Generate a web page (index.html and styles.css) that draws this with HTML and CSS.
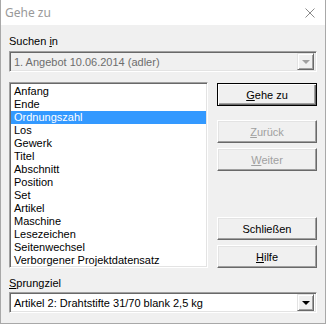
FILE: index.html
```html
<!DOCTYPE html>
<html lang="de">
<head>
    <meta charset="UTF-8">
    <title>Gehe zu</title>
    <link rel="stylesheet" href="styles.css">
</head>
<body>
    <div class="window">
        <div class="titlebar">
            <span class="title">Gehe zu</span>
            <svg class="close" width="10" height="10" viewBox="0 0 10 10">
                <path d="M0.5 0.5 L9.5 9.5 M9.5 0.5 L0.5 9.5" stroke="#8a8a8a" stroke-width="1" fill="none"/>
            </svg>
        </div>

        <div class="content">
            <div class="label label-top">Suchen <u>i</u>n</div>
            <div class="combo disabled">
                <span class="combo-text">1. Angebot 10.06.2014 (adler)</span>
                <span class="combo-btn"><span class="arrow"></span></span>
            </div>

            <div class="main">
                <ul class="listbox">
                    <li>Anfang</li>
                    <li>Ende</li>
                    <li class="selected">Ordnungszahl</li>
                    <li>Los</li>
                    <li>Gewerk</li>
                    <li>Titel</li>
                    <li>Abschnitt</li>
                    <li>Position</li>
                    <li>Set</li>
                    <li>Artikel</li>
                    <li>Maschine</li>
                    <li>Lesezeichen</li>
                    <li>Seitenwechsel</li>
                    <li>Verborgener Projektdatensatz</li>
                </ul>

                <div class="buttons">
                    <button class="btn default"><u>G</u>ehe zu</button>
                    <button class="btn off gap-big"><u>Z</u>urück</button>
                    <button class="btn off"><u>W</u>eiter</button>
                    <button class="btn push-down">Schließen</button>
                    <button class="btn"><u>H</u>ilfe</button>
                </div>
            </div>

            <div class="label label-bottom"><u>S</u>prungziel</div>
            <div class="combo">
                <span class="combo-text">Artikel 2: Drahtstifte 31/70 blank 2,5 kg</span>
                <span class="combo-btn"><span class="arrow"></span></span>
            </div>
        </div>
    </div>
</body>
</html>
```

FILE: styles.css
```css
body {
    margin: 0;
    font-family: "Liberation Sans", Arial, sans-serif;
    font-size: 11px;
    color: #000;
}
.window {
    width: 326px;
    height: 324px;
    box-sizing: border-box;
    border: 1px solid #a8a8a8;
    border-top: none;
    background: #f0f0f0;
    display: flex;
    flex-direction: column;
}
.titlebar {
    height: 25px;
    flex-shrink: 0;
    background: #fff;
    display: flex;
    align-items: center;
    justify-content: space-between;
    padding: 0 10px 0 4px;
}
.title {
    font-family: "Noto Sans", "Open Sans", sans-serif;
    font-size: 12px;
    color: #999;
}
.content {
    padding: 10px 8px 0 8px;
}
.label {
    height: 13px;
    line-height: 13px;
}
.label-bottom {
    margin-top: 9px;
}

/* versenkte Rahmen */
.combo,
.listbox {
    box-sizing: border-box;
    border: 1px solid;
    border-color: #a0a0a0 #fff #fff #a0a0a0;
    box-shadow: inset 1px 1px #696969, inset -1px -1px #e3e3e3;
    background: #fff;
}
.combo {
    height: 21px;
    margin-top: 3px;
    display: flex;
    align-items: center;
    justify-content: space-between;
    padding: 0 2px 0 4px;
}
.label-bottom + .combo {
    margin-top: 2px;
}
.combo.disabled {
    background: #f0f0f0;
    color: #6d6d6d;
}
.combo-btn {
    width: 17px;
    height: 17px;
    box-sizing: border-box;
    border: 1px solid;
    border-color: #e3e3e3 #696969 #696969 #e3e3e3;
    box-shadow: inset 1px 1px #fff, inset -1px -1px #a0a0a0;
    background: #f0f0f0;
    display: flex;
    align-items: center;
    justify-content: center;
}
.arrow {
    width: 0;
    height: 0;
    border-left: 4px solid transparent;
    border-right: 4px solid transparent;
    border-top: 4px solid #000;
    margin-top: 1px;
}
.disabled .arrow {
    border-top-color: #a0a0a0;
}

.main {
    display: flex;
    gap: 9px;
    margin-top: 10px;
}
.listbox {
    width: 199px;
    height: 186px;
    margin: 0;
    padding: 2px 1px;
    list-style: none;
}
.listbox li {
    height: 13px;
    line-height: 13px;
    padding-left: 3px;
}
.listbox li.selected {
    background: #3399ff;
    color: #fff;
}

.buttons {
    width: 100px;
    display: flex;
    flex-direction: column;
    padding-top: 1px;
}
.btn {
    height: 23px;
    box-sizing: border-box;
    border: 1px solid;
    border-color: #fff #696969 #696969 #fff;
    box-shadow: inset -1px -1px #a0a0a0, inset 1px 1px #e3e3e3;
    background: #f0f0f0;
    font-family: inherit;
    font-size: 11px;
    color: #000;
    padding: 0;
    margin-bottom: 5px;
}
.btn.default {
    border: 1px solid #000;
    box-shadow: inset 1px 1px #fff, inset -1px -1px #696969, inset -2px -2px #a0a0a0;
}
.btn.off {
    color: #a0a0a0;
}
.gap-big {
    margin-top: 9px;
}
.push-down {
    margin-top: auto;
}
.buttons .btn:last-child {
    margin-bottom: 0;
}
```
